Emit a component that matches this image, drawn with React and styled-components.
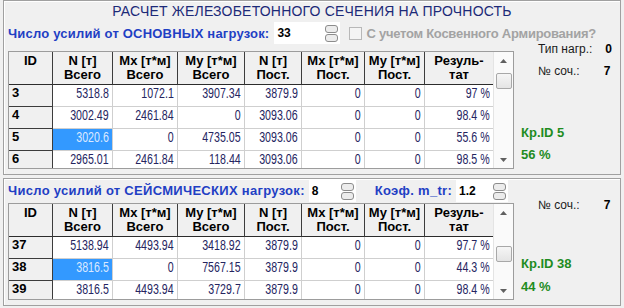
import React from "react";
import styled, { createGlobalStyle } from "styled-components";

// data
const HEADERS = [
  ["ID", ""],
  ["N [т]", "Всего"],
  ["Mx [т*м]", "Всего"],
  ["My [т*м]", "Всего"],
  ["N [т]", "Пост."],
  ["Mx [т*м]", "Пост."],
  ["My [т*м]", "Пост."],
  ["Резуль-", "тат"],
];
const COLS = [44, 60, 65, 67, 57, 63, 60, 69];

const MAIN_ROWS = [
  { id: 3, v: ["5318.8", "1072.1", "3907.34", "3879.9", "0", "0", "97 %"] },
  { id: 4, v: ["3002.49", "2461.84", "0", "3093.06", "0", "0", "98.4 %"] },
  { id: 5, v: ["3020.6", "0", "4735.05", "3093.06", "0", "0", "55.6 %"], sel: 0 },
  { id: 6, v: ["2965.01", "2461.84", "118.44", "3093.06", "0", "0", "98.5 %"] },
];
const SEISMIC_ROWS = [
  { id: 37, v: ["5138.94", "4493.94", "3418.92", "3879.9", "0", "0", "97.7 %"] },
  { id: 38, v: ["3816.5", "0", "7567.15", "3879.9", "0", "0", "44.3 %"], sel: 0 },
  { id: 39, v: ["3816.5", "4493.94", "3729.7", "3879.9", "0", "0", "98.4 %"] },
];

const GlobalStyle = createGlobalStyle`
  html, body {
    margin: 0;
    padding: 0;
    background: #f0f0f0;
    font-family: "Liberation Sans", Arial, sans-serif;
  }
`;

const Window = styled.div`
  width: 624px;
  height: 308px;
  overflow: hidden;
  display: flex;
  flex-direction: column;
`;

const Panel = styled.div`
  margin: ${(p) => p.$top || 0}px 3px 0;
  height: ${(p) => p.$h}px;
  box-sizing: border-box;
  border: 1px solid #a0a0a0;
  box-shadow: inset 1px 1px 0 #ffffff;
  display: flex;
  flex-direction: ${(p) => (p.$row ? "row" : "column")};
`;

const Title = styled.div`
  height: 21px;
  line-height: 21px;
  text-align: center;
  font-size: 14px;
  letter-spacing: 0.2px;
  color: #1c2a78;
`;

const ControlRow = styled.div`
  height: ${(p) => p.$h || 22}px;
  display: flex;
  align-items: center;
  padding-left: 4px;
  white-space: nowrap;
`;

const Label = styled.span`
  font-size: 13px;
  font-weight: bold;
  letter-spacing: ${(p) => p.$spacing ?? 0.3}px;
  color: ${(p) => (p.$disabled ? "#a3a3a3" : "#1f3fc4")};
  margin-left: ${(p) => p.$gap || 0}px;
`;

const Input = styled.div`
  width: ${(p) => p.$w}px;
  height: 22px;
  margin-left: ${(p) => p.$gap || 4}px;
  background: #ffffff;
  display: flex;
  align-items: center;
  justify-content: space-between;
  padding: 0 2px 0 3px;
  box-sizing: border-box;
  font-size: 12px;
  font-weight: bold;
  color: #000;
  align-self: flex-end;
`;

const Spinner = styled.div`
  display: flex;
  flex-direction: column;
  gap: 1px;
`;

const SpinHalf = styled.div`
  width: 11px;
  height: 6px;
  border: 1px solid #8c8c8c;
  border-radius: 3px;
  background: #ececec;
`;

const CheckBox = styled.div`
  width: 11px;
  height: 11px;
  margin-left: 9px;
  border: 1px solid #b8b8b8;
  background: #f4f4f4;
`;

const Body = styled.div`
  display: flex;
  align-items: flex-start;
`;

const LeftCol = styled.div`
  display: flex;
  flex-direction: column;
`;

const Frame = styled.div`
  margin-left: 4px;
  margin-top: ${(p) => p.$top || 0}px;
  width: 506px;
  height: ${(p) => p.$h}px;
  box-sizing: border-box;
  border: 1px solid #9c9c9c;
  display: flex;
  background: #ffffff;
`;

const Clip = styled.div`
  width: 485px;
  overflow: hidden;
`;

const Table = styled.table`
  table-layout: fixed;
  border-collapse: separate;
  border-spacing: 0;
  width: 485px;
`;

const HeadCell = styled.th`
  height: 33px;
  box-sizing: border-box;
  padding: 2px 0 0;
  vertical-align: top;
  background: #f0f0f0;
  border-right: 1px solid #3c3c3c;
  border-bottom: 1px solid #2c2c2c;
  font-size: 13px;
  font-weight: bold;
  line-height: 14px;
  color: #000;
  text-align: center;
  white-space: nowrap;
`;

const IdCell = styled.td`
  height: 22px;
  box-sizing: border-box;
  padding: 1px 0 0 3px;
  vertical-align: top;
  background: #f0f0f0;
  border-right: 1px solid #3c3c3c;
  border-bottom: 1px solid #3c3c3c;
  font-size: 13px;
  font-weight: bold;
  line-height: 14px;
  color: #000;
`;

const DataCell = styled.td`
  height: 22px;
  box-sizing: border-box;
  padding: 1px 3px 0 0;
  vertical-align: top;
  text-align: right;
  background: ${(p) => (p.$sel ? "#3399ff" : "#ffffff")};
  border-right: 1px solid #cfcfcf;
  border-bottom: 1px solid #cfcfcf;
  font-size: 14px;
  line-height: 14px;
  color: ${(p) => (p.$sel ? "#dbe9ff" : "#25255f")};
  white-space: nowrap;
`;

// the grid font of the original is a condensed one
const Narrow = styled.span`
  display: inline-block;
  transform: scaleX(0.76);
  transform-origin: right center;
`;

const ScrollBar = styled.div`
  width: 19px;
  display: flex;
  flex-direction: column;
  background: #fafafa;
  border-left: 1px solid #e4e4e4;
`;

const Arrow = styled.div`
  height: 17px;
  display: flex;
  align-items: center;
  justify-content: center;
`;

const Track = styled.div`
  flex: 1;
  display: flex;
  flex-direction: column;
`;

const Thumb = styled.div`
  margin: ${(p) => p.$offset}px 1px 0 2px;
  height: 14px;
  border: 1px solid #a8a8a8;
  border-radius: 2px;
  background: linear-gradient(#f6f6f6, #e4e4e4);
`;

const Side = styled.div`
  margin-left: 7px;
  margin-top: ${(p) => p.$top || 0}px;
  display: flex;
  flex-direction: column;
`;

const InfoRow = styled.div`
  height: 16px;
  line-height: 16px;
  margin-top: ${(p) => p.$gap || 0}px;
  padding-left: 17px;
  font-size: 12px;
  color: #1a1a1a;
  white-space: nowrap;
`;

const InfoValue = styled.b`
  margin-left: ${(p) => p.$gap}px;
  color: #000;
`;

const Critical = styled.div`
  height: 16px;
  line-height: 16px;
  margin-top: ${(p) => p.$gap || 0}px;
  font-size: 13px;
  font-weight: bold;
  color: #1f8c1f;
  white-space: nowrap;
`;

const ArrowIcon = ({ down }) => (
  <svg width="7" height="4" viewBox="0 0 7 4">
    <path d={down ? "M0 0 L7 0 L3.5 4 Z" : "M0 4 L7 4 L3.5 0 Z"} fill="#606060" />
  </svg>
);

const Spin = () => (
  <Spinner>
    <SpinHalf />
    <SpinHalf />
  </Spinner>
);

const Grid = ({ rows, height, top, thumb }) => (
  <Frame $h={height} $top={top}>
    <Clip>
      <Table>
        <colgroup>
          {COLS.map((w, i) => (
            <col key={i} style={{ width: w }} />
          ))}
        </colgroup>
        <thead>
          <tr>
            {HEADERS.map(([a, b], i) => (
              <HeadCell key={i}>
                {a}
                <br />
                {b}
              </HeadCell>
            ))}
          </tr>
        </thead>
        <tbody>
          {rows.map((r) => (
            <tr key={r.id}>
              <IdCell>{r.id}</IdCell>
              {r.v.map((v, i) => (
                <DataCell key={i} $sel={r.sel === i}>
                  <Narrow>{v}</Narrow>
                </DataCell>
              ))}
            </tr>
          ))}
        </tbody>
      </Table>
    </Clip>
    <ScrollBar>
      <Arrow>
        <ArrowIcon />
      </Arrow>
      <Track>
        <Thumb $offset={thumb} />
      </Track>
      <Arrow>
        <ArrowIcon down />
      </Arrow>
    </ScrollBar>
  </Frame>
);

export default function App() {
  return (
    <Window>
      <GlobalStyle />
      <Panel $h={175}>
        <Title>РАСЧЕТ ЖЕЛЕЗОБЕТОННОГО СЕЧЕНИЯ НА ПРОЧНОСТЬ</Title>
        <ControlRow>
          <Label $spacing={0.2}>Число усилий от ОСНОВНЫХ нагрузок:</Label>
          <Input $w={66} $gap={5}>
            33
            <Spin />
          </Input>
          <CheckBox />
          <Label $disabled $spacing={-0.25} $gap={4}>
            С учетом Косвенного Армирования?
          </Label>
        </ControlRow>
        <Body>
          <Grid rows={MAIN_ROWS} height={118} top={7} thumb={4} />
          <Side $top={-3}>
            <InfoRow>
              Тип нагр.:<InfoValue $gap={13}>0</InfoValue>
            </InfoRow>
            <InfoRow $gap={6}>
              № соч.:<InfoValue $gap={24}>7</InfoValue>
            </InfoRow>
            <Critical $gap={46}>Кр.ID 5</Critical>
            <Critical $gap={6}>56 %</Critical>
          </Side>
        </Body>
      </Panel>
      <Panel $h={128} $top={3} $row>
        <LeftCol>
          <ControlRow $h={23}>
            <Label>Число усилий от СЕЙСМИЧЕСКИХ нагрузок:</Label>
            <Input $w={47}>
              8
              <Spin />
            </Input>
            <Label $gap={19}>Коэф. m_tr:</Label>
            <Input $w={52}>
              1.2
              <Spin />
            </Input>
          </ControlRow>
          <Grid rows={SEISMIC_ROWS} height={97} top={1} thumb={25} />
        </LeftCol>
        <Side $top={18}>
          <InfoRow>
            № соч.:<InfoValue $gap={24}>7</InfoValue>
          </InfoRow>
          <Critical $gap={43}>Кр.ID 38</Critical>
          <Critical $gap={7}>44 %</Critical>
        </Side>
      </Panel>
    </Window>
  );
}
